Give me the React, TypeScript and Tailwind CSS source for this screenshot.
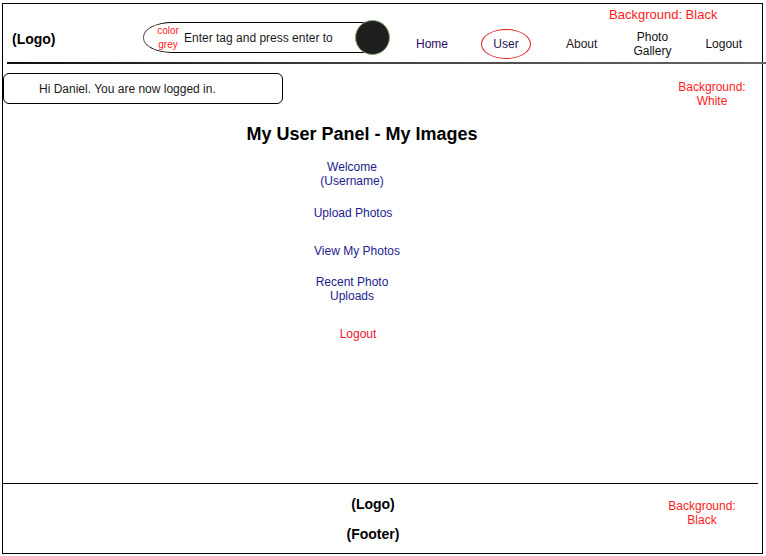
import React from "react";

export default function App() {
  const font = { fontFamily: '"Liberation Sans", Arial, sans-serif' };
  return (
    <div className="w-[766px] h-[556px] bg-white overflow-hidden" style={font}>
      <div className="relative ml-[2px] mt-[3px] w-[761px] h-[551px] border border-black flex flex-col">
        {/* annotations */}
        <div className="absolute left-[606px] top-[3px] text-[13px] leading-[16px] text-[#ff1a1a]">
          Background: Black
        </div>
        <div className="absolute left-[672px] top-[76px] w-[74px] text-center text-[12px] leading-[14px] text-[#ff1a1a]">
          Background:
          <br />
          White
        </div>
        <div className="absolute left-[662px] top-[495px] w-[74px] text-center text-[12px] leading-[14px] text-[#ff1a1a]">
          Background:
          <br />
          Black
        </div>

        {/* header */}
        <div className="h-[58px] flex items-start shrink-0">
          <div className="w-[140px] pl-[9px] mt-[26px] text-[14px] leading-[18px] font-bold text-black">
            (Logo)
          </div>
          <div className="w-[247px] mt-[16px] flex items-center">
            <div className="w-[222px] h-[31px] border-t border-b border-l border-t-black border-b-black border-l-[#555] rounded-tl-[29px_15px] rounded-bl-[29px_15px] flex items-center pl-[12px]">
              <div className="w-[24px] text-center text-[10px] leading-[14px] text-[#ff1a1a]">
                color
                <br />
                grey
              </div>
              <div className="ml-[4px] text-[12px] leading-[14px] text-[#1a1a1a] whitespace-nowrap">
                Enter tag and press enter to
              </div>
            </div>
            <div className="-ml-[10px] w-[35px] h-[35px] rounded-full bg-[#1e1e1e] border border-[#8aa878] shrink-0" />
          </div>
          <div className="mt-[25px] h-[30px] flex items-center text-[12px] leading-[14px] text-[#111]">
            <div className="ml-[26px] text-[#2a0a60]">Home</div>
            <div className="ml-[33px] w-[50px] h-[30px] rounded-[50%] border border-[#e02020] flex items-center justify-center text-[#1a1a50]">
              User
            </div>
            <div className="ml-[35px] text-[#222]">About</div>
            <div className="ml-[36px] text-center">
              Photo
              <br />
              Gallery
            </div>
            <div className="ml-[34px]">Logout</div>
          </div>
        </div>
        <div className="ml-[4px] w-[759px] h-[2px] shrink-0 bg-gradient-to-r from-[#111] via-[#444] to-[#666]" />

        {/* main */}
        <div className="flex-1 flex flex-col">
          <div className="mt-[9px] w-[280px] h-[31px] border border-black rounded-[6px] flex items-center pl-[35px] text-[12px] text-[#1a1a1a]">
            Hi Daniel. You are now logged in.
          </div>
          <div className="mt-[20px] w-[718px] text-center text-[18px] leading-[20px] font-bold text-black">
            My User Panel - My Images
          </div>
          <div className="w-[698px] flex flex-col items-center text-center text-[12px] leading-[14px] text-[#22228f]">
            <div className="mt-[16px]">
              Welcome
              <br />
              (Username)
            </div>
            <div className="mt-[18px] ml-[2px]">Upload Photos</div>
            <div className="mt-[24px] ml-[10px]">View My Photos</div>
            <div className="mt-[17px]">
              Recent Photo
              <br />
              Uploads
            </div>
            <div className="mt-[24px] ml-[12px] text-[#ee1133]">Logout</div>
          </div>
        </div>

        {/* footer */}
        <div className="-ml-[1px] w-[756px] h-[1px] bg-black shrink-0" />
        <div className="h-[69px] shrink-0 flex flex-col items-center w-[740px] text-[14px] leading-[18px] font-bold text-black">
          <div className="mt-[11px]">(Logo)</div>
          <div className="mt-[12px]">(Footer)</div>
        </div>
      </div>
    </div>
  );
}
